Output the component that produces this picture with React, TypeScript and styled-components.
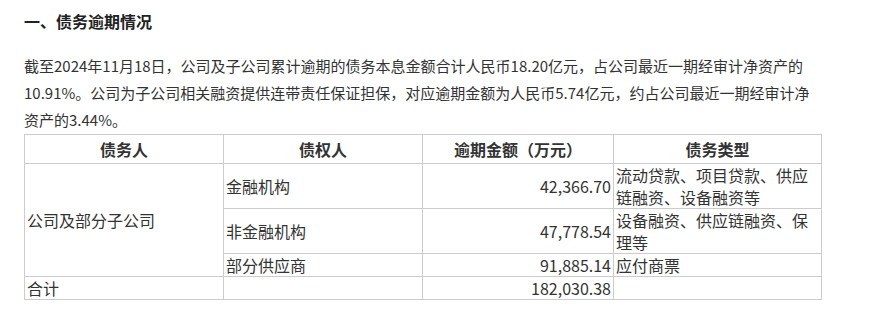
import React from "react";
import styled, { createGlobalStyle } from "styled-components";

const Global = createGlobalStyle`
  html, body { margin: 0; padding: 0; background: #fff; }
  body {
    font-family: "Noto Sans CJK SC", "Noto Sans", sans-serif;
    color: #333;
  }
`;

const Page = styled.div`
  padding: 8px 0 0 24px;
  width: 797px;
`;

const Title = styled.h3`
  margin: 0;
  font-size: 16px;
  line-height: 26px;
  font-weight: bold;
  color: #222;
`;

const Para = styled.p`
  margin: 18px 0 0 0;
  font-size: 15px;
  line-height: 27px;
  color: #333;
  width: 790px;
`;

const Table = styled.table`
  border-collapse: collapse;
  table-layout: fixed;
  width: 797px;
  margin-top: 1px;
  font-size: 16px;
  line-height: 22px;
  color: #333;
`;

const Th = styled.th`
  border: 1px solid #ccc;
  padding: 3px 2px;
  font-weight: bold;
  text-align: center;
  color: #333;
`;

const Td = styled.td<{ $align?: string }>`
  border: 1px solid #ccc;
  padding: 0 2px;
  vertical-align: middle;
  text-align: ${(p) => p.$align || "left"};
`;

const TypeTd = styled(Td)`
  padding-right: 9px;
`;

export default function App() {
  return (
    <>
      <Global />
      <Page>
        <Title>一、债务逾期情况</Title>
        <Para>
          截至2024年11月18日，公司及子公司累计逾期的债务本息金额合计人民币18.20亿元，占公司最近一期经审计净资产的10.91%。公司为子公司相关融资提供连带责任保证担保，对应逾期金额为人民币5.74亿元，约占公司最近一期经审计净资产的3.44%。
        </Para>
        <Table>
          <colgroup>
            <col style={{ width: 199 }} />
            <col style={{ width: 199 }} />
            <col style={{ width: 191 }} />
            <col style={{ width: 208 }} />
          </colgroup>
          <thead>
            <tr>
              <Th>债务人</Th>
              <Th>债权人</Th>
              <Th>逾期金额（万元）</Th>
              <Th>债务类型</Th>
            </tr>
          </thead>
          <tbody>
            <tr>
              <Td rowSpan={3}>公司及部分子公司</Td>
              <Td>金融机构</Td>
              <Td $align="right">42,366.70</Td>
              <TypeTd>流动贷款、项目贷款、供应链融资、设备融资等</TypeTd>
            </tr>
            <tr>
              <Td>非金融机构</Td>
              <Td $align="right">47,778.54</Td>
              <TypeTd>设备融资、供应链融资、保理等</TypeTd>
            </tr>
            <tr>
              <Td>部分供应商</Td>
              <Td $align="right">91,885.14</Td>
              <TypeTd>应付商票</TypeTd>
            </tr>
            <tr>
              <Td>合计</Td>
              <Td></Td>
              <Td $align="right">182,030.38</Td>
              <TypeTd></TypeTd>
            </tr>
          </tbody>
        </Table>
      </Page>
    </>
  );
}
